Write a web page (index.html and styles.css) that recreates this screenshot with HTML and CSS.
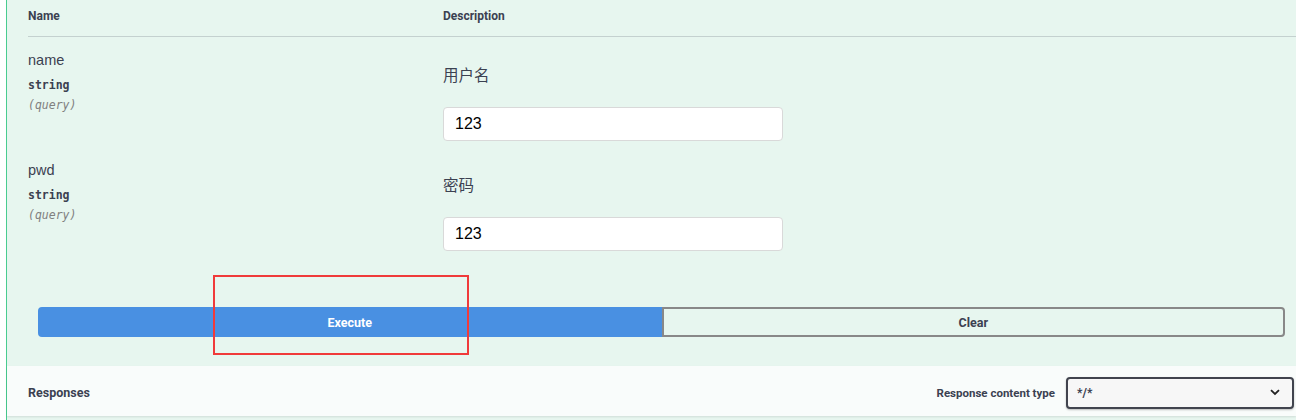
FILE: index.html
```html
<!DOCTYPE html>
<html>
<head>
<meta charset="utf-8">
<link rel="stylesheet" href="styles.css">
</head>
<body>
<div class="opblock">
  <div class="params">
    <div class="row head">
      <div class="col-name">Name</div>
      <div class="col-desc">Description</div>
    </div>
    <div class="row param">
      <div class="col-name">
        <div class="pname">name</div>
        <div class="ptype">string</div>
        <div class="pin">(query)</div>
      </div>
      <div class="col-desc">
        <div class="plabel">用户名</div>
        <input class="pinput" type="text" value="123">
      </div>
    </div>
    <div class="row param">
      <div class="col-name">
        <div class="pname">pwd</div>
        <div class="ptype">string</div>
        <div class="pin">(query)</div>
      </div>
      <div class="col-desc">
        <div class="plabel">密码</div>
        <input class="pinput" type="text" value="123">
      </div>
    </div>
  </div>
  <div class="btn-group">
    <button class="btn execute">Execute</button>
    <button class="btn clear">Clear</button>
  </div>
  <div class="responses">
    <div class="resp-title">Responses</div>
    <div class="resp-type">
      <span class="resp-label">Response content type</span>
      <div class="select">
        <span>*/*</span>
        <svg width="10" height="7" viewBox="0 0 10 7"><path d="M1 1.2 L5 5 L9 1.2" fill="none" stroke="#222" stroke-width="1.8"/></svg>
      </div>
    </div>
  </div>
  <div class="highlight"></div>
</div>
</body>
</html>
```

FILE: styles.css
```css
* { box-sizing: border-box; }
html, body { margin: 0; padding: 0; background: #fff; }
body { width: 1296px; height: 420px; overflow: hidden; font-family: Roboto, "Open Sans", sans-serif; color: #3b4151; }

.opblock {
  position: relative;
  margin-left: 6px;
  border-left: 1px solid #49cc90;
  background: #e7f6ef;
  height: 420px;
}

.params { padding-left: 21px; }

.row { display: flex; }
.col-name { width: 415px; flex: none; }
.col-desc { flex: 1; }

.head {
  height: 37px;
  align-items: center;
  border-bottom: 1px solid #c4d1cf;
  font-size: 12px;
  font-weight: 700;
  padding-bottom: 4px;
}

.param { height: 110px; }
.param .col-name { padding-top: 14px; }
.pname { font-family: "Liberation Sans", Arial, sans-serif; font-size: 14.5px; line-height: 18px; color: #3b4151; }
.ptype { font-family: "DejaVu Sans Mono", monospace; font-size: 11.5px; font-weight: 600; line-height: 20px; margin-top: 6px; color: #3b4151; }
.pin { font-family: "DejaVu Sans Mono", monospace; font-size: 11.5px; font-style: italic; line-height: 20px; color: #808080; }

.param .col-desc { padding-top: 27px; }
.plabel { font-family: "Noto Sans CJK SC", sans-serif; font-size: 15.5px; line-height: 20px; color: #3b4151; }
.pinput {
  display: block;
  margin-top: 23px;
  width: 340px;
  height: 34px;
  border: 1px solid #d9d9d9;
  border-radius: 4px;
  background: #fff;
  padding: 0 11px;
  font-family: "Liberation Sans", Arial, sans-serif;
  font-size: 16px;
  color: #000;
  outline: none;
}

.btn-group {
  display: flex;
  padding: 50px 11px 29px 31px;
}
.btn {
  flex: 1;
  height: 30px;
  border: 2px solid #888;
  font-family: Roboto, sans-serif;
  font-size: 12.5px;
  font-weight: 700;
  cursor: pointer;
  padding: 0;
}
.execute {
  background: #4990e2;
  border-color: #4990e2;
  color: #fff;
  border-radius: 4px 0 0 4px;
}
.clear {
  background: transparent;
  color: #3b4151;
  border-radius: 0 4px 4px 0;
}

.responses {
  height: 50px;
  display: flex;
  align-items: center;
  justify-content: space-between;
  background: #f9fcfb;
  box-shadow: 0 1px 2px rgba(0,0,0,0.1);
  padding: 3px 2px 0 21px;
}
.resp-title { font-size: 12.5px; font-weight: 700; }
.resp-type { display: flex; align-items: center; gap: 11px; }
.resp-label { font-size: 11.5px; font-weight: 700; }
.select {
  width: 228px;
  height: 32px;
  border: 2px solid #41444e;
  border-radius: 4px;
  background: #f7f7f7;
  display: flex;
  align-items: center;
  justify-content: space-between;
  padding: 0 12px 0 9px;
  font-size: 12px;
  font-weight: 700;
  color: #3b4151;
  box-shadow: 0 1px 2px rgba(0,0,0,0.25);
}

.highlight {
  position: absolute;
  left: 206px;
  top: 275px;
  width: 256px;
  height: 80px;
  border: 2px solid #f03a3a;
}
```
